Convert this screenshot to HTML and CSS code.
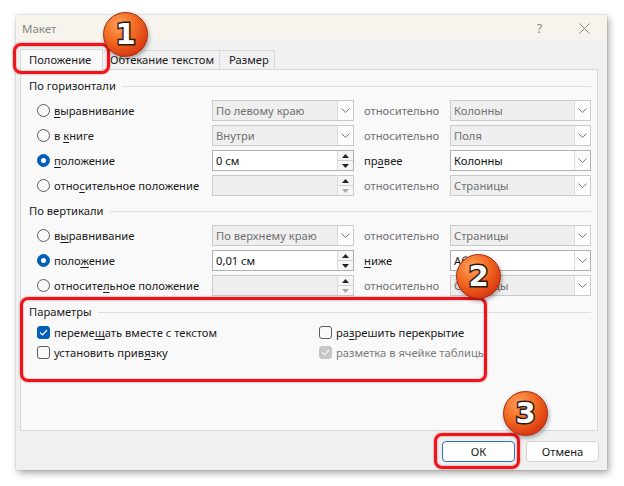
FILE: index.html
```html
<!DOCTYPE html>
<html lang="ru">
<head>
<meta charset="utf-8">
<title>Макет</title>
<link rel="stylesheet" href="styles.css">
</head>
<body>
<div class="page">
  <div class="dialog">
    <div class="titlebar">
      <span class="title">Макет</span>
      <span class="tb-btn help">?</span>
      <span class="tb-btn close"><svg width="11" height="11" viewBox="0 0 11 11"><path d="M0.5 0.5L10.5 10.5M10.5 0.5L0.5 10.5" stroke="#8a8a8a" stroke-width="1" fill="none"/></svg></span>
    </div>
    <div class="main">
      <div class="tabs">
        <div class="tab active">Положение</div>
        <div class="tab t2">Обтекание текстом</div>
        <div class="tab t3">Размер</div>
      </div>
      <div class="panel">
        <div class="group-head"><span>По горизонтали</span></div>
        <div class="rows">
          <label class="opt"><span class="radio"></span><span><u>в</u>ыравнивание</span></label>
          <div class="combo dis"><span class="val">По левому краю</span><span class="arrow"><svg width="9" height="5" viewBox="0 0 9 5"><path d="M0.5 0.5L4.5 4.5L8.5 0.5" stroke="#777" fill="none"/></svg></span></div>
          <span class="rel dis">относительно</span>
          <div class="combo dis"><span class="val">Колонны</span><span class="arrow"><svg width="9" height="5" viewBox="0 0 9 5"><path d="M0.5 0.5L4.5 4.5L8.5 0.5" stroke="#777" fill="none"/></svg></span></div>

          <label class="opt"><span class="radio"></span><span>в <u>к</u>ниге</span></label>
          <div class="combo dis"><span class="val">Внутри</span><span class="arrow"><svg width="9" height="5" viewBox="0 0 9 5"><path d="M0.5 0.5L4.5 4.5L8.5 0.5" stroke="#777" fill="none"/></svg></span></div>
          <span class="rel dis">относительно</span>
          <div class="combo dis"><span class="val">Поля</span><span class="arrow"><svg width="9" height="5" viewBox="0 0 9 5"><path d="M0.5 0.5L4.5 4.5L8.5 0.5" stroke="#777" fill="none"/></svg></span></div>

          <label class="opt"><span class="radio on"></span><span><u>п</u>оложение</span></label>
          <div class="spin"><span class="val">0 см</span><span class="spin-btns"><span class="sb"><svg width="7" height="4" viewBox="0 0 7 4"><path d="M0 4L3.5 0L7 4Z" fill="#222"/></svg></span><span class="sb"><svg width="7" height="4" viewBox="0 0 7 4"><path d="M0 0L3.5 4L7 0Z" fill="#222"/></svg></span></span></div>
          <span class="rel">пр<u>а</u>вее</span>
          <div class="combo"><span class="val">Колонны</span><span class="arrow"><svg width="9" height="5" viewBox="0 0 9 5"><path d="M0.5 0.5L4.5 4.5L8.5 0.5" stroke="#777" fill="none"/></svg></span></div>

          <label class="opt"><span class="radio"></span><span>отно<u>с</u>ительное положение</span></label>
          <div class="spin dis"><span class="val"></span><span class="spin-btns"><span class="sb"><svg width="7" height="4" viewBox="0 0 7 4"><path d="M0 4L3.5 0L7 4Z" fill="#222"/></svg></span><span class="sb"><svg width="7" height="4" viewBox="0 0 7 4"><path d="M0 0L3.5 4L7 0Z" fill="#aaa"/></svg></span></span></div>
          <span class="rel dis">относительно</span>
          <div class="combo dis"><span class="val">Страницы</span><span class="arrow"><svg width="9" height="5" viewBox="0 0 9 5"><path d="M0.5 0.5L4.5 4.5L8.5 0.5" stroke="#777" fill="none"/></svg></span></div>
        </div>

        <div class="group-head g2"><span>По вертикали</span></div>
        <div class="rows">
          <label class="opt"><span class="radio"></span><span>в<u>ы</u>равнивание</span></label>
          <div class="combo dis"><span class="val">По верхнему краю</span><span class="arrow"><svg width="9" height="5" viewBox="0 0 9 5"><path d="M0.5 0.5L4.5 4.5L8.5 0.5" stroke="#777" fill="none"/></svg></span></div>
          <span class="rel dis">относительно</span>
          <div class="combo dis"><span class="val">Страницы</span><span class="arrow"><svg width="9" height="5" viewBox="0 0 9 5"><path d="M0.5 0.5L4.5 4.5L8.5 0.5" stroke="#777" fill="none"/></svg></span></div>

          <label class="opt"><span class="radio on"></span><span>поло<u>ж</u>ение</span></label>
          <div class="spin"><span class="val">0,01 см</span><span class="spin-btns"><span class="sb"><svg width="7" height="4" viewBox="0 0 7 4"><path d="M0 4L3.5 0L7 4Z" fill="#222"/></svg></span><span class="sb"><svg width="7" height="4" viewBox="0 0 7 4"><path d="M0 0L3.5 4L7 0Z" fill="#222"/></svg></span></span></div>
          <span class="rel"><u>н</u>иже</span>
          <div class="combo"><span class="val">Абзаца</span><span class="arrow"><svg width="9" height="5" viewBox="0 0 9 5"><path d="M0.5 0.5L4.5 4.5L8.5 0.5" stroke="#777" fill="none"/></svg></span></div>

          <label class="opt"><span class="radio"></span><span>относите<u>л</u>ьное положение</span></label>
          <div class="spin dis"><span class="val"></span><span class="spin-btns"><span class="sb"><svg width="7" height="4" viewBox="0 0 7 4"><path d="M0 4L3.5 0L7 4Z" fill="#222"/></svg></span><span class="sb"><svg width="7" height="4" viewBox="0 0 7 4"><path d="M0 0L3.5 4L7 0Z" fill="#aaa"/></svg></span></span></div>
          <span class="rel dis">относительно</span>
          <div class="combo dis"><span class="val">Страницы</span><span class="arrow"><svg width="9" height="5" viewBox="0 0 9 5"><path d="M0.5 0.5L4.5 4.5L8.5 0.5" stroke="#777" fill="none"/></svg></span></div>
        </div>

        <div class="group-head g3"><span>Параметры</span></div>
        <div class="checks">
          <label class="opt"><span class="check on"><svg width="9" height="7" viewBox="0 0 9 7"><path d="M1 3.5L3.5 6L8 1" stroke="#fff" stroke-width="1.2" fill="none"/></svg></span><span>переме<u>щ</u>ать вместе с текстом</span></label>
          <label class="opt"><span class="check"></span><span>ра<u>з</u>решить перекрытие</span></label>
          <label class="opt"><span class="check"></span><span>установить прив<u>я</u>зку</span></label>
          <label class="opt dis"><span class="check dison"><svg width="9" height="7" viewBox="0 0 9 7"><path d="M1 3.5L3.5 6L8 1" stroke="#f4f4f4" stroke-width="1.2" fill="none"/></svg></span><span>разметка в ячейке таблицы</span></label>
        </div>
      </div>
    </div>
    <div class="footer">
      <button class="btn default">ОК</button>
      <button class="btn">Отмена</button>
    </div>
  </div>

  <div class="annot">
    <div class="hl hl1"></div>
    <div class="hl hl2"></div>
    <div class="hl hl3"></div>
    <div class="badge b1"><span>1</span></div>
    <div class="badge b2"><span>2</span></div>
    <div class="badge b3"><span>3</span></div>
  </div>
</div>
</body>
</html>
```

FILE: styles.css
```css
* { box-sizing: border-box; }
body {
  margin: 0;
  background: #fff;
  font-family: "Noto Sans", "Open Sans", sans-serif;
  font-size: 11.2px;
  color: #1a1a1a;
}
.page {
  position: relative;
  width: 624px;
  height: 486px;
  padding: 15px 0 0 16px;
}
.dialog {
  width: 591px;
  height: 455px;
  background: #f0f0f0;
  display: flex;
  flex-direction: column;
  box-shadow: 2px 3px 7px rgba(0,0,0,0.35), 0 0 1px rgba(0,0,0,0.35);
}
.titlebar {
  height: 26px;
  background: #f7f4ee;
  display: flex;
  align-items: center;
  padding-left: 6px;
}
.title { flex: 1; color: #858585; font-size: 11.5px; }
.tb-btn {
  width: 45px;
  height: 26px;
  display: flex;
  align-items: center;
  justify-content: center;
  color: #8a8a8a;
  font-size: 12.5px;
}
.main {
  padding: 9px 9px 0 4px;
}
.tabs {
  display: flex;
  height: 19px;
  align-items: flex-end;
}
.tab {
  height: 19px;
  border: 1px solid #d9d9d9;
  border-bottom: none;
  border-left: none;
  background: #f0f0f0;
  padding-left: 7px;
  line-height: 17px;
  white-space: nowrap;
}
.tab.active {
  width: 83px;
  height: 21px;
  border-left: 1px solid #d9d9d9;
  background: #f9f9f9;
  position: relative;
  top: 1px;
  line-height: 19px;
  padding-left: 8px;
}
.tab.t2 { width: 117px; }
.tab.t3 { width: 55px; padding-left: 9px; }
.panel {
  height: 362px;
  border: 1px solid #d9d9d9;
  background: #f9f9f9;
  padding: 8px 6px 0 8px;
}
.group-head {
  display: flex;
  align-items: center;
  height: 16px;
  line-height: 16px;
  gap: 6px;
  white-space: nowrap;
}
.group-head::after {
  content: "";
  flex: 1;
  height: 1px;
  background: #dedede;
}
.group-head.g2 { margin-top: 7px; }
.group-head.g3 { margin-top: 8px; }
.rows {
  display: grid;
  grid-template-columns: 175px 142px 96px 141px;
  grid-auto-rows: 21px;
  row-gap: 4px;
  margin: 6px 0 0 8px;
}
.opt {
  display: flex;
  align-items: center;
  gap: 4px;
  white-space: nowrap;
}
.opt.dis { color: #7a7a7a; }
u { text-underline-offset: 2px; }
.radio {
  width: 13px;
  height: 13px;
  border: 1px solid #5c5c5c;
  border-radius: 50%;
  flex: none;
  display: flex;
  align-items: center;
  justify-content: center;
}
.radio.on {
  background: #005fb8;
  border-color: #005fb8;
}
.radio.on::after {
  content: "";
  width: 5px;
  height: 5px;
  border-radius: 50%;
  background: #fff;
}
.combo, .spin {
  display: flex;
  height: 21px;
  border: 1px solid #b0b0b0;
  background: #fff;
  color: #111;
}
.combo.dis, .spin.dis {
  border-color: #cacaca;
  background: #efefef;
  color: #707070;
}
.val {
  flex: 1;
  padding-left: 3px;
  line-height: 19px;
  white-space: nowrap;
  overflow: hidden;
}
.arrow {
  width: 16px;
  flex: none;
  background: #fdfdfd;
  border-left: 1px solid #dadada;
  display: flex;
  align-items: center;
  justify-content: center;
}
.spin-btns {
  width: 16px;
  flex: none;
  display: flex;
  flex-direction: column;
  border-left: 1px solid #dadada;
  background: #f6f6f6;
}
.sb {
  flex: 1;
  display: flex;
  align-items: center;
  justify-content: center;
}
.sb + .sb { border-top: 1px solid #cfcfcf; }
.rel {
  padding-left: 10px;
  line-height: 21px;
  white-space: nowrap;
}
.rel.dis { color: #707070; }
.checks {
  display: grid;
  grid-template-columns: 282px 1fr;
  grid-auto-rows: 20px;
  margin: 2px 0 0 8px;
}
.check {
  width: 13px;
  height: 13px;
  border: 1px solid #5c5c5c;
  border-radius: 3px;
  flex: none;
  display: flex;
  align-items: center;
  justify-content: center;
}
.check.on { background: #005fb8; border-color: #005fb8; }
.check.dison { background: #c6c6c6; border-color: #c6c6c6; }
.footer {
  display: flex;
  justify-content: flex-end;
  gap: 11px;
  padding: 10px 8px 0 0;
}
.btn {
  width: 73px;
  height: 21px;
  border: 1px solid #d3d3d3;
  border-radius: 4px;
  background: #fdfdfd;
  font-family: inherit;
  font-size: 11.2px;
  color: #1a1a1a;
  padding: 0;
}
.btn.default { border-color: #2f6fb8; }

.annot {
  position: absolute;
  inset: 0;
  pointer-events: none;
}
.hl {
  position: absolute;
  border: 3px solid #f2121a;
  border-radius: 8px;
  box-shadow: 0 0 2px rgba(120,0,0,0.6), inset 0 0 2px rgba(120,0,0,0.5);
}
.hl1 { left: 13px; top: 43px; width: 97px; height: 31px; }
.hl2 { left: 20px; top: 297px; width: 467px; height: 85px; }
.hl3 { left: 434px; top: 433px; width: 86px; height: 36px; }
.badge {
  position: absolute;
  width: 45px;
  height: 45px;
  border-radius: 50%;
  background: radial-gradient(circle at 35% 28%, #ffa159 0%, #f26a22 40%, #d8350f 80%, #b8220a 100%);
  border: 1px solid #a3250c;
  box-shadow: 1px 2px 4px rgba(0,0,0,0.35);
  display: flex;
  align-items: center;
  justify-content: center;
}
.badge span {
  font-family: "DejaVu Sans", sans-serif;
  font-weight: bold;
  font-size: 29px;
  line-height: 1;
  color: #fff;
  -webkit-text-stroke: 3px #2a1a14;
  paint-order: stroke fill;
}
.b1 { left: 103px; top: 12px; }
.b2 { left: 456px; top: 254px; }
.b3 { left: 503px; top: 391px; }
```
